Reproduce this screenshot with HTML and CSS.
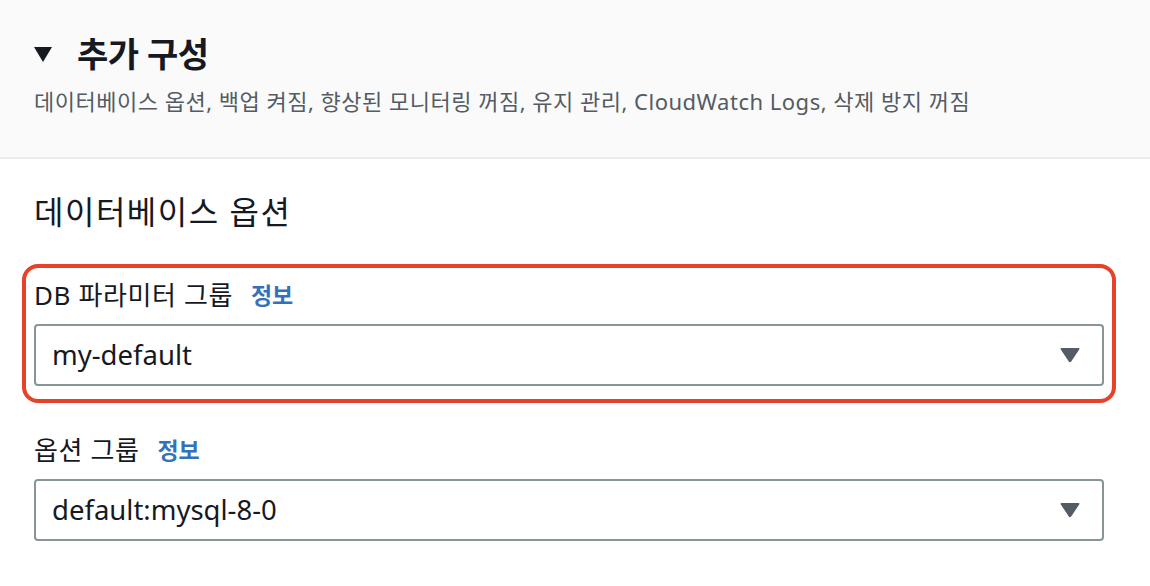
FILE: index.html
```html
<!DOCTYPE html>
<html lang="ko">
<head>
<meta charset="utf-8">
<link rel="stylesheet" href="styles.css">
</head>
<body>
<section class="panel">
  <header class="panel-header">
    <div class="title-row">
      <svg class="caret" width="18" height="15" viewBox="0 0 18 15"><path d="M0 0H18L9 15Z" fill="#16191f"/></svg>
      <h2 class="title">추가 구성</h2>
    </div>
    <p class="subtitle">데이터베이스 옵션, 백업 켜짐, 향상된 모니터링 꺼짐, 유지 관리, CloudWatch Logs, 삭제 방지 꺼짐</p>
  </header>
  <div class="panel-body">
    <h3 class="section-title">데이터베이스 옵션</h3>
    <div class="field highlight">
      <div class="label-row"><span class="label">DB 파라미터 그룹</span><a class="info">정보</a></div>
      <div class="select">
        <span class="value">my-default</span>
        <svg class="arrow" width="20" height="16" viewBox="0 0 20 16"><path d="M1.5 1H18.5Q20 1 19.2 2.4L11.2 14.6Q10 16 8.8 14.6L0.8 2.4Q0 1 1.5 1Z" fill="#545b64"/></svg>
      </div>
    </div>
    <div class="field second">
      <div class="label-row"><span class="label">옵션 그룹</span><a class="info">정보</a></div>
      <div class="select">
        <span class="value">default:mysql-8-0</span>
        <svg class="arrow" width="20" height="16" viewBox="0 0 20 16"><path d="M1.5 1H18.5Q20 1 19.2 2.4L11.2 14.6Q10 16 8.8 14.6L0.8 2.4Q0 1 1.5 1Z" fill="#545b64"/></svg>
      </div>
    </div>
  </div>
</section>
</body>
</html>
```
FILE: styles.css
```css
* { box-sizing: border-box; }
html, body { margin: 0; padding: 0; background: #ffffff; }
body {
  font-family: "Noto Sans", "Noto Sans CJK KR", sans-serif;
  color: #16191f;
  width: 1150px;
  height: 586px;
  overflow: hidden;
}
.panel-header {
  background: #fafafa;
  height: 159px;
  border-bottom: 2px solid #eaeded;
  padding: 34px 0 0 34px;
}
.title-row {
  display: flex;
  align-items: center;
  height: 40px;
}
.caret { margin-right: 25px; margin-top: 1px; }
.title {
  margin: 0;
  font-size: 34px;
  line-height: 40px;
  font-weight: 700;
  letter-spacing: -0.5px;
}
.subtitle {
  margin: 13px 0 0;
  font-size: 22px;
  line-height: 28px;
  color: #545b64;
  letter-spacing: 0.5px;
}
.panel-body {
  padding: 33px 46px 0 34px;
}
.section-title {
  margin: 0;
  font-size: 32px;
  line-height: 40px;
  font-weight: 400;
  letter-spacing: 1.5px;
}
.field.highlight {
  margin: 32px -12px 0;
  border: 4px solid #e8412a;
  border-radius: 16px;
  padding: 12px 8px 13px;
}
.field.second { margin-top: 32px; }
.label-row {
  display: flex;
  align-items: center;
  height: 30px;
  margin-bottom: 14px;
}
.label {
  font-size: 26px;
  line-height: 30px;
  letter-spacing: 0.6px;
}
.info {
  margin-left: 18px;
  font-size: 23px;
  font-weight: 700;
  color: #3372b9;
  line-height: 30px;
}
.select {
  height: 62px;
  border: 2px solid #879596;
  border-radius: 4px;
  display: flex;
  align-items: center;
  justify-content: space-between;
  padding: 0 22px 0 16px;
}
.value {
  font-size: 27.5px;
  line-height: 36px;
}
.arrow { display: block; }
```
